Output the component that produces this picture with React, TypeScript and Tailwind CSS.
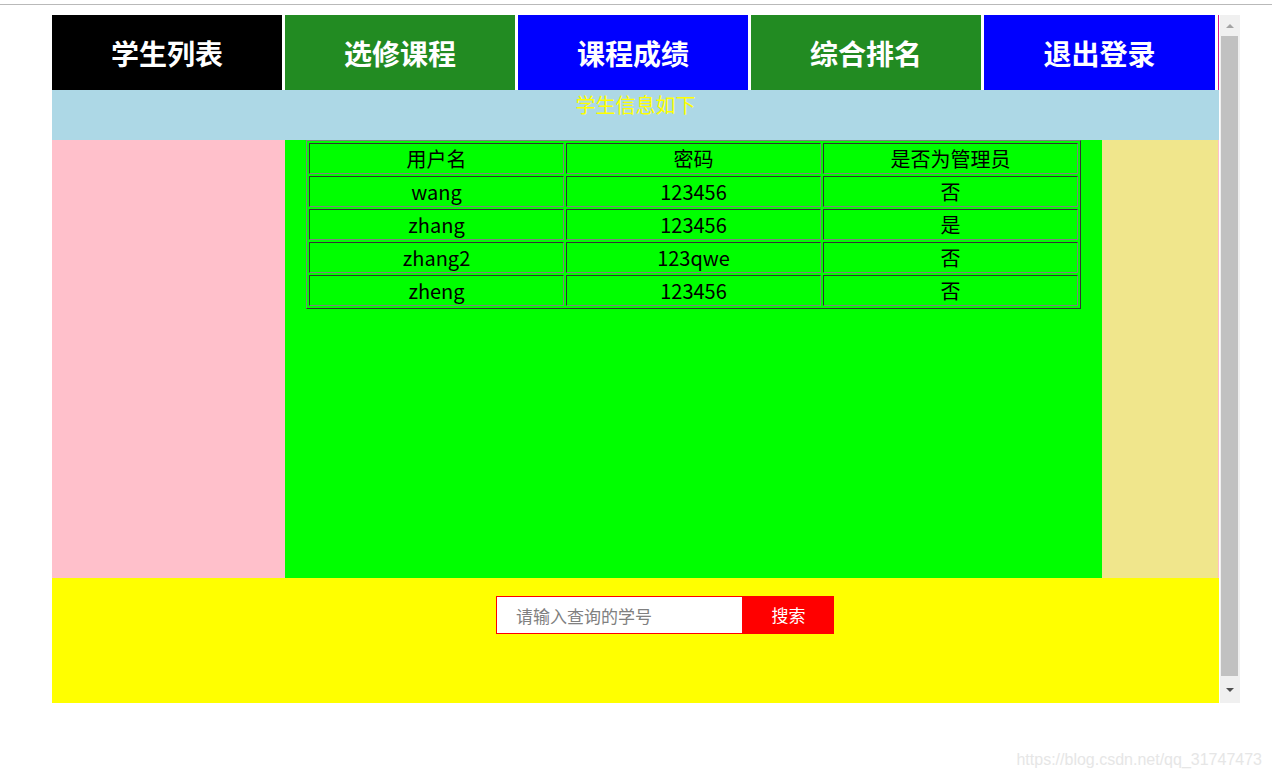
const navItems = [
  { name: "学生列表", bg: "bg-black", w: "w-[230px]" },
  { name: "选修课程", bg: "bg-[#228b22]", w: "w-[230px]" },
  { name: "课程成绩", bg: "bg-[#0000ff]", w: "w-[230px]" },
  { name: "综合排名", bg: "bg-[#228b22]", w: "w-[230px]" },
  { name: "退出登录", bg: "bg-[#0000ff]", w: "w-[231px]" },
];

const users = [
  { name: "wang", pwd: "123456", admin: "否" },
  { name: "zhang", pwd: "123456", admin: "是" },
  { name: "zhang2", pwd: "123qwe", admin: "否" },
  { name: "zheng", pwd: "123456", admin: "否" },
];

const cell =
  "border border-t-[#333] border-l-[#333] border-b-[#808080] border-r-[#808080] p-0 text-center text-[20px] leading-[29px] font-normal";

export default function App() {
  return (
    <div
      className="min-h-screen bg-white"
      style={{ fontFamily: '"Noto Sans CJK SC", "Microsoft YaHei", sans-serif' }}
    >
      <div className="pt-[4px]">
        <div className="h-px bg-[#b9b9b9]" />
      </div>

      <div className="ml-[52px] mt-[10px] flex h-[688px] w-[1188px]">
        {/* page content */}
        <div className="flex w-[1167px] flex-col">
          <nav className="flex h-[75px]">
            <div className="flex gap-[3px]">
              {navItems.map((item) => (
                <div
                  key={item.name}
                  className={`${item.bg} ${item.w} flex items-center justify-center text-[28px] font-bold text-white`}
                >
                  {item.name}
                </div>
              ))}
            </div>
            <div className="ml-[3px] w-px bg-[#d4168c]" />
          </nav>

          <div className="h-[50px] bg-[#add8e6] text-center text-[20px] leading-[29px] text-[#ffff00]">
            学生信息如下
          </div>

          <div className="flex h-[438px]">
            <div className="w-[233px] bg-[#ffc0cb]" />
            <div className="w-[817px] bg-[#00ff00]">
              <table className="mx-auto w-[775px] table-fixed border-separate border-spacing-[2px] border border-t-[#808080] border-l-[#808080] border-b-[#333] border-r-[#333] text-black">
                <thead>
                  <tr>
                    <th className={cell}>用户名</th>
                    <th className={cell}>密码</th>
                    <th className={cell}>是否为管理员</th>
                  </tr>
                </thead>
                <tbody>
                  {users.map((u) => (
                    <tr key={u.name}>
                      <td className={cell}>{u.name}</td>
                      <td className={cell}>{u.pwd}</td>
                      <td className={cell}>{u.admin}</td>
                    </tr>
                  ))}
                </tbody>
              </table>
            </div>
            <div className="w-[116px] bg-[#f0e68c]" />
            <div className="w-px bg-[#ffc0cb]" />
          </div>

          <div className="h-[125px] bg-[#ffff00] pt-[18px]">
            <div className="ml-[444px] flex h-[38px]">
              <input
                type="text"
                placeholder="请输入查询的学号"
                className="h-[38px] w-[247px] border border-[#ff0000] bg-white pl-[19px] text-[17px] outline-none placeholder:text-[#808080]"
              />
              <button className="h-[38px] w-[91px] bg-[#ff0000] text-[17px] text-white">
                搜索
              </button>
            </div>
          </div>
        </div>

        {/* scrollbar */}
        <div className="ml-px flex w-[20px] flex-col bg-[#f0f0f0]">
          <div className="flex h-[21px] items-center justify-center">
            <div className="h-0 w-0 border-x-[4px] border-b-[4px] border-x-transparent border-b-[#a3a3a3]" />
          </div>
          <div className="ml-px mr-[2px] h-[640px] bg-[#c1c1c1]" />
          <div className="flex flex-1 items-center justify-center">
            <div className="h-0 w-0 border-x-[4px] border-t-[4px] border-x-transparent border-t-[#505050]" />
          </div>
        </div>
      </div>

      <div
        className="mt-[45px] pr-[10px] text-right text-[16px] text-[#e6e6e6]"
        style={{ fontFamily: '"Liberation Sans", Arial, sans-serif' }}
      >
        https://blog.csdn.net/qq_31747473
      </div>
    </div>
  );
}
